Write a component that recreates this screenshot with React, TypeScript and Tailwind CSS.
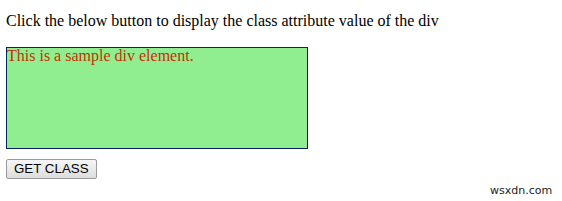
export default function App() {
  return (
    <div className="relative w-[562px] h-[201px] bg-white" style={{ fontFamily: '"Liberation Serif", "Times New Roman", serif' }}>
      <div className="flex flex-col pl-[6px] pt-[12px]">
        <p className="text-[16px] leading-[18px] text-black">Click the below button to display the class attribute value of the div</p>
        <div className="mt-[17px] w-[302px] h-[102px] border border-[#0a1f6e] bg-[#90ee90] text-[16px] leading-[16px] text-[#c83000]">
          This is a sample div element.
        </div>
        <div className="mt-[10px] flex">
          <button
            className="h-[20px] px-[7px] border border-[#9a9a9a] rounded-[2px] bg-gradient-to-b from-[#f6f6f6] to-[#dddddd] text-[13.33px] leading-[16px] text-black"
            style={{ fontFamily: '"Liberation Sans", Arial, sans-serif' }}
          >
            GET CLASS
          </button>
        </div>
      </div>
      <div
        className="absolute left-[490px] top-[184px] text-[11px] leading-[13px] text-[#222]"
        style={{ fontFamily: '"DejaVu Sans", Verdana, sans-serif' }}
      >
        wsxdn.com
      </div>
    </div>
  );
}
